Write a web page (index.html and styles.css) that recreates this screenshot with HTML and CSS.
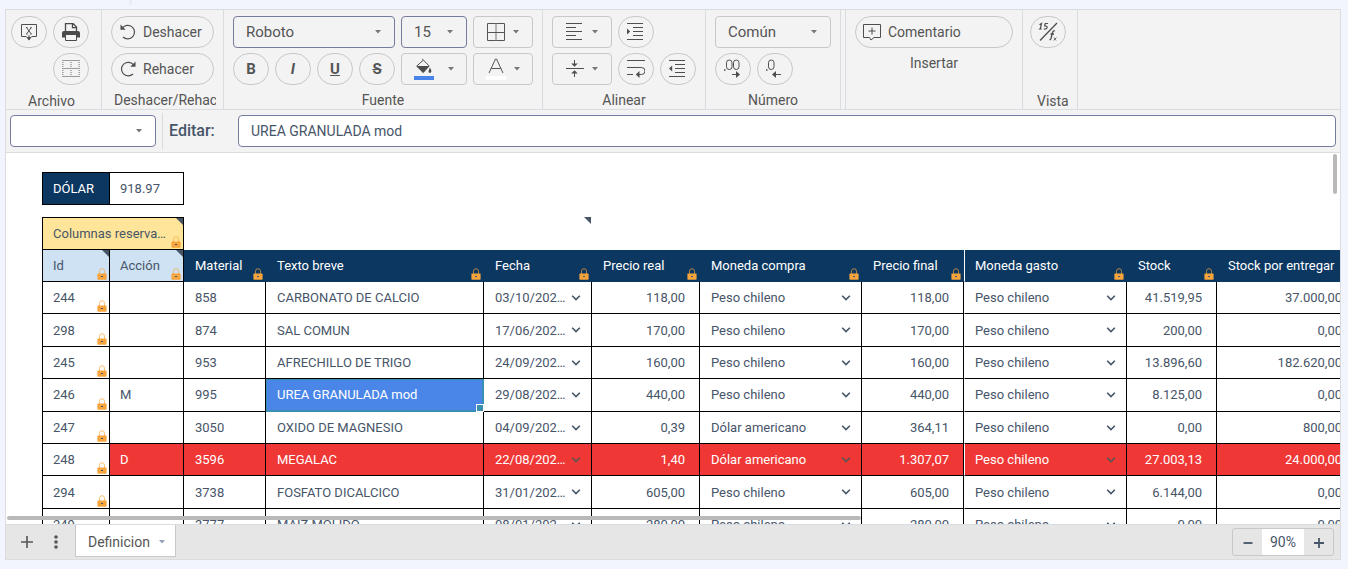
FILE: index.html
```html
<!DOCTYPE html>
<html lang="es">
<head>
<meta charset="utf-8">
<title>Definicion</title>
<link rel="stylesheet" href="styles.css">
</head>
<body>
<svg class="defs" aria-hidden="true">
  <symbol id="lock" viewBox="0 0 10 12"><path d="M2.5 6V3.2a2.5 2.5 0 0 1 5 0V6" fill="none" stroke="#f5a53c" stroke-opacity=".7"/><rect x=".4" y="5.4" width="9.2" height="6.3" rx=".6" fill="#f6a43b"/><rect class="keyhole" x="4" y="8" width="2" height="1"/></symbol>
  <symbol id="chev" viewBox="0 0 10 8"><path d="M1.2 1.8 5 5.6l3.8-3.8" fill="none" stroke="currentColor" stroke-width="1.6"/></symbol>
  <symbol id="caret" viewBox="0 0 6 4"><path d="M0 0h6L3 3.4z" fill="currentColor"/></symbol>
</svg>

<main class="spreadsheet">
  <div class="ribbon">
    <section class="group group-file">
      <div class="tools">
        <button class="tool" aria-label="Exportar"><svg width="18" height="18" viewBox="0 0 18 18" fill="none" stroke="#4f4f4f"><path d="M6.5 13.5h-5V1.5h15v12h-5M9 12v5"/><path d="m6.7 4.8 4.4 6M11.1 4.8l-4.4 6M6 4.6h1.5M10.3 4.6h1.5M6 11h1.5M10.3 11h1.5"/><path d="M6.3 14h5.4L9 17.6z" fill="#4f4f4f" stroke="none"/></svg></button>
        <button class="tool" aria-label="Imprimir"><svg width="18" height="18" viewBox="0 0 18 18" fill="none" stroke="#4a4a4a"><path d="M3.5 9V.6h7.6l3.4 3.4V9M10.5.6v4h4" stroke-width="1.3"/><path d="M0 14.500v-4.500Q0 8 2 8h14q2 0 2 2v4.500h-3V12H3v2.500z" fill="#4a4a4a" stroke="none"/><path d="M3.500 12v5.500h11V12"/></svg></button>
      </div>
      <div class="tools tools-end">
        <button class="tool" aria-label="Divisores"><svg width="18" height="18" viewBox="0 0 18 18" fill="none" stroke="#9a9a9a"><path d="M0 .5h18M0 8.5h18M0 16.5h18"/><path d="M.8 2v15M9 2v15M17.200 2v15" stroke-width="1.500" stroke-dasharray="1 1"/></svg></button>
      </div>
      <h2 class="caption">Archivo</h2>
    </section>
    <section class="group group-undo">
      <button class="tool tool-text"><svg width="16" height="16" viewBox="0 0 16 16" fill="none" stroke="#4f4f4f" stroke-width="1.2"><path d="M2.300 4A6.800 6.800 0 1 1 3 13"/><path d="M.5.500v5.200h5.200z" fill="#4f4f4f" stroke="none"/></svg>Deshacer</button>
      <button class="tool tool-text"><svg width="16" height="16" viewBox="0 0 16 16" fill="none" stroke="#4f4f4f" stroke-width="1.2"><path d="M13.700 4a6.800 6.800 0 1 0-.7 9"/><path d="M15.500.500v5.200h-5.200z" fill="#4f4f4f" stroke="none"/></svg>Rehacer</button>
      <h2 class="caption">Deshacer/Rehacer</h2>
    </section>
    <section class="group">
      <div class="tools">
        <span class="combo combo-font"><select aria-label="Fuente"><option>Roboto</option></select><svg class="caret"><use href="#caret"/></svg></span>
        <span class="combo combo-size"><select aria-label="Tamaño"><option>15</option></select><svg class="caret"><use href="#caret"/></svg></span>
        <button class="tool tool-menu" aria-label="Bordes"><svg width="18" height="18" viewBox="0 0 18 18" fill="none" stroke="#555"><path d="M.5.5h17v17H.5z"/><path d="M9 0v18" stroke="#777"/><path d="M0 9.5h18"/></svg><svg class="caret"><use href="#caret"/></svg></button>
      </div>
      <div class="tools">
        <button class="tool glyph">B</button>
        <button class="tool glyph italic">I</button>
        <button class="tool glyph underline">U</button>
        <button class="tool glyph strike">S</button>
        <button class="tool tool-menu tool-fill" aria-label="Color de fondo"><svg width="20" height="22" viewBox="0 0 20 22"><path d="m8.2.8 7 7.2-6 6.5L2.7 8.2 9 2.4" fill="none" stroke="#4a4a4a"/><path d="M2.7 8h12.500l-6 6.700z" fill="#4a4a4a"/><path d="M15.800 9.500q2 3 1.500 4a1.400 1.400 0 0 1-2.800 0z" fill="#4a4a4a"/><path d="M0 18h20v4H0z" fill="#4884e9"/></svg><svg class="caret"><use href="#caret"/></svg></button>
        <button class="tool tool-menu" aria-label="Color de texto"><svg width="20" height="22" viewBox="0 0 20 22"><path d="m3 15 6.500-14h1L17 15M5.200 10.500h9.600" fill="none" stroke="#555"/><path d="M0 18h20v4H0z" fill="#fff"/></svg><svg class="caret"><use href="#caret"/></svg></button>
      </div>
      <h2 class="caption">Fuente</h2>
    </section>
    <section class="group">
      <div class="tools">
        <button class="tool tool-menu" aria-label="Alineación horizontal"><svg width="18" height="18" viewBox="0 0 18 18" stroke="#4f4f4f"><path d="M0 .5h16M0 4.5h10M0 8.5h16M0 12.5h10M0 16.5h16"/></svg><svg class="caret"><use href="#caret"/></svg></button>
        <button class="tool" aria-label="Aumentar sangría"><svg width="18" height="18" viewBox="0 0 18 18" stroke="#4f4f4f"><path d="M0 .5h16M6 4.5h10M6 8.5h10M6 12.5h10M0 16.5h16"/><path d="M0 5.5v6l3.2-3z" fill="#4f4f4f" stroke="none"/></svg></button>
      </div>
      <div class="tools">
        <button class="tool tool-menu" aria-label="Alineación vertical"><svg width="18" height="18" viewBox="0 0 18 18" stroke="#4f4f4f"><path d="M0 8.5h18M8.5 0v6M8.5 17v-6"/><path d="M5.2 3.500h6.600l-3.300 3.300zM5.200 13.500h6.600l-3.300-3.300z" fill="#4f4f4f" stroke="none"/></svg><svg class="caret"><use href="#caret"/></svg></button>
        <button class="tool" aria-label="Ajustar texto"><svg width="18" height="18" viewBox="0 0 18 18" fill="none" stroke="#4f4f4f"><path d="M0 .5h18M0 7.5h14.500a3.500 3.500 0 0 1 0 7H10M0 14.500h6"/><path d="M12.500 11v7l-3.700-3.500z" fill="#4f4f4f" stroke="none"/></svg></button>
        <button class="tool" aria-label="Disminuir sangría"><svg width="18" height="18" viewBox="0 0 18 18" stroke="#4f4f4f"><path d="M0 .5h16M6 4.5h10M6 8.5h10M6 12.5h10M0 16.5h16"/><path d="M3.200 5.500v6L0 8.500z" fill="#4f4f4f" stroke="none"/></svg></button>
      </div>
      <h2 class="caption">Alinear</h2>
    </section>
    <section class="group">
      <div class="tools">
        <span class="combo combo-format"><select aria-label="Formato de número"><option>Común</option></select><svg class="caret"><use href="#caret"/></svg></span>
      </div>
      <div class="tools">
        <button class="tool" aria-label="Agregar decimales"><svg width="20" height="20" viewBox="0 0 20 20" fill="none" stroke="#4f4f4f"><rect x="3.500" y="1" width="5.500" height="9.500" rx="2.700"/><rect x="10.500" y="1" width="5.500" height="9.500" rx="2.700"/><path d="M1 11h1.500" stroke-width="1.600"/><path d="M9 15.500h6"/><path d="M13 12v7l4-3.500z" fill="#4f4f4f" stroke="none"/></svg></button>
        <button class="tool" aria-label="Quitar decimales"><svg width="20" height="20" viewBox="0 0 20 20" fill="none" stroke="#4f4f4f"><rect x="3.500" y="1" width="5.500" height="9.500" rx="2.700"/><path d="M1 11h1.500" stroke-width="1.600"/><path d="M9 15.500h7"/><path d="M11 12v7l-4-3.500z" fill="#4f4f4f" stroke="none"/></svg></button>
      </div>
      <h2 class="caption">Número</h2>
    </section>
    <div class="spacer"></div>
    <section class="group">
      <button class="tool tool-text tool-comment"><svg width="18" height="18" viewBox="0 0 18 18" fill="none" stroke="#4f4f4f"><path d="M.5 1.500h17v13H11L8 17l-1.500-2.500h-6zM9 4.500v7M5.500 8h7"/></svg>Comentario</button>
      <h2 class="caption">Insertar</h2>
    </section>
    <section class="group group-view">
      <button class="tool" aria-label="Mostrar fórmulas"><svg width="20" height="20" viewBox="0 0 20 20" fill="none" stroke="#4f4f4f"><path d="M2 18.500 19 1" stroke-width="1.300"/><path d="m1.500 2.800 2-1.300L2.300 7M.8 7h3M10 1.500H7.200L6.600 4h1.200q1.600.2 1.300 1.700Q8.500 7.300 5.800 7" stroke-width="1.200"/><path d="M17 9q-2-.8-2.500 1.500l-1.500 6q-.5 1.500-1.500 1M12.500 12h3.500" stroke-width="1.300"/><path d="m16 15.500 2 3M18.500 15.500l-3 3" stroke-width=".8"/></svg></button>
      <h2 class="caption">Vista</h2>
    </section>
  </div>

  <div class="formula-bar">
    <span class="combo combo-name"><select aria-label="Cuadro de nombres"><option></option></select><svg class="caret"><use href="#caret"/></svg></span>
    <label class="edit-label" for="edit">Editar:</label>
    <input class="edit-input" id="edit" type="text" value="UREA GRANULADA mod">
  </div>

  <div class="sheet">
    <div class="sheet-scroll">
      <table class="cells rate">
        <colgroup><col class="c-id"><col class="c-action"></colgroup>
        <tr><th>DÓLAR</th><td>918.97</td></tr>
      </table>
      <table class="cells items">
        <colgroup><col class="c-id"><col class="c-action"><col class="c-material"><col class="c-text"><col class="c-date"><col class="c-price"><col class="c-buy"><col class="c-final"><col class="c-spend"><col class="c-stock"><col class="c-pending"></colgroup>
        <thead>
          <tr><th class="reserved note" colspan="2">Columnas reserva…<svg class="lock"><use href="#lock"/></svg></th><td class="blank"></td><td class="blank"></td><td class="blank note"></td><td class="blank" colspan="6"></td></tr>
          <tr>
            <th class="key note">Id<svg class="lock"><use href="#lock"/></svg></th>
            <th class="key note">Acción<svg class="lock"><use href="#lock"/></svg></th>
            <th>Material<svg class="lock"><use href="#lock"/></svg></th>
            <th>Texto breve<svg class="lock"><use href="#lock"/></svg></th>
            <th>Fecha<svg class="lock"><use href="#lock"/></svg></th>
            <th>Precio real<svg class="lock"><use href="#lock"/></svg></th>
            <th>Moneda compra<svg class="lock"><use href="#lock"/></svg></th>
            <th>Precio final<svg class="lock"><use href="#lock"/></svg></th>
            <th class="split">Moneda gasto<svg class="lock"><use href="#lock"/></svg></th>
            <th>Stock<svg class="lock"><use href="#lock"/></svg></th>
            <th>Stock por entregar</th>
          </tr>
        </thead>
        <tbody>
          <tr><td>244<svg class="lock"><use href="#lock"/></svg></td><td></td><td>858</td><td>CARBONATO DE CALCIO</td><td>03/10/202…<button class="open" aria-label="Elegir fecha"><svg><use href="#chev"/></svg></button></td><td class="num">118,00</td><td>Peso chileno<button class="open" aria-label="Elegir moneda"><svg><use href="#chev"/></svg></button></td><td class="num">118,00</td><td class="split">Peso chileno<button class="open" aria-label="Elegir moneda"><svg><use href="#chev"/></svg></button></td><td class="num">41.519,95</td><td class="num">37.000,00</td></tr>
          <tr><td>298<svg class="lock"><use href="#lock"/></svg></td><td></td><td>874</td><td>SAL COMUN</td><td>17/06/202…<button class="open" aria-label="Elegir fecha"><svg><use href="#chev"/></svg></button></td><td class="num">170,00</td><td>Peso chileno<button class="open" aria-label="Elegir moneda"><svg><use href="#chev"/></svg></button></td><td class="num">170,00</td><td class="split">Peso chileno<button class="open" aria-label="Elegir moneda"><svg><use href="#chev"/></svg></button></td><td class="num">200,00</td><td class="num">0,00</td></tr>
          <tr><td>245<svg class="lock"><use href="#lock"/></svg></td><td></td><td>953</td><td>AFRECHILLO DE TRIGO</td><td>24/09/202…<button class="open" aria-label="Elegir fecha"><svg><use href="#chev"/></svg></button></td><td class="num">160,00</td><td>Peso chileno<button class="open" aria-label="Elegir moneda"><svg><use href="#chev"/></svg></button></td><td class="num">160,00</td><td class="split">Peso chileno<button class="open" aria-label="Elegir moneda"><svg><use href="#chev"/></svg></button></td><td class="num">13.896,60</td><td class="num">182.620,00</td></tr>
          <tr><td>246<svg class="lock"><use href="#lock"/></svg></td><td>M</td><td>995</td><td class="selected">UREA GRANULADA mod</td><td>29/08/202…<button class="open" aria-label="Elegir fecha"><svg><use href="#chev"/></svg></button></td><td class="num">440,00</td><td>Peso chileno<button class="open" aria-label="Elegir moneda"><svg><use href="#chev"/></svg></button></td><td class="num">440,00</td><td class="split">Peso chileno<button class="open" aria-label="Elegir moneda"><svg><use href="#chev"/></svg></button></td><td class="num">8.125,00</td><td class="num">0,00</td></tr>
          <tr><td>247<svg class="lock"><use href="#lock"/></svg></td><td></td><td>3050</td><td>OXIDO DE MAGNESIO</td><td>04/09/202…<button class="open" aria-label="Elegir fecha"><svg><use href="#chev"/></svg></button></td><td class="num">0,39</td><td>Dólar americano<button class="open" aria-label="Elegir moneda"><svg><use href="#chev"/></svg></button></td><td class="num">364,11</td><td class="split">Peso chileno<button class="open" aria-label="Elegir moneda"><svg><use href="#chev"/></svg></button></td><td class="num">0,00</td><td class="num">800,00</td></tr>
          <tr class="deleted"><td>248<svg class="lock"><use href="#lock"/></svg></td><td>D</td><td>3596</td><td>MEGALAC</td><td>22/08/202…<button class="open" aria-label="Elegir fecha"><svg><use href="#chev"/></svg></button></td><td class="num">1,40</td><td>Dólar americano<button class="open" aria-label="Elegir moneda"><svg><use href="#chev"/></svg></button></td><td class="num">1.307,07</td><td class="split">Peso chileno<button class="open" aria-label="Elegir moneda"><svg><use href="#chev"/></svg></button></td><td class="num">27.003,13</td><td class="num">24.000,00</td></tr>
          <tr><td>294<svg class="lock"><use href="#lock"/></svg></td><td></td><td>3738</td><td>FOSFATO DICALCICO</td><td>31/01/202…<button class="open" aria-label="Elegir fecha"><svg><use href="#chev"/></svg></button></td><td class="num">605,00</td><td>Peso chileno<button class="open" aria-label="Elegir moneda"><svg><use href="#chev"/></svg></button></td><td class="num">605,00</td><td class="split">Peso chileno<button class="open" aria-label="Elegir moneda"><svg><use href="#chev"/></svg></button></td><td class="num">6.144,00</td><td class="num">0,00</td></tr>
          <tr><td>249<svg class="lock"><use href="#lock"/></svg></td><td></td><td>3777</td><td>MAIZ MOLIDO</td><td>08/01/202…<button class="open" aria-label="Elegir fecha"><svg><use href="#chev"/></svg></button></td><td class="num">280,00</td><td>Peso chileno<button class="open" aria-label="Elegir moneda"><svg><use href="#chev"/></svg></button></td><td class="num">280,00</td><td class="split">Peso chileno<button class="open" aria-label="Elegir moneda"><svg><use href="#chev"/></svg></button></td><td class="num">0,00</td><td class="num">0,00</td></tr>
        </tbody>
      </table>
    </div>
    <div class="thumb thumb-y"></div>
    <div class="thumb thumb-x"></div>
  </div>

  <footer class="tab-bar">
    <button class="bar-button" aria-label="Agregar hoja"><svg width="14" height="14" viewBox="0 0 14 14"><path d="M7 1v12M1 7h12" stroke="#555" stroke-width="1.6"/></svg></button>
    <button class="bar-button" aria-label="Lista de hojas"><svg width="14" height="14" viewBox="0 0 14 14" fill="#555"><circle cx="7" cy="2" r="1.8"/><circle cx="7" cy="7" r="1.8"/><circle cx="7" cy="12" r="1.8"/></svg></button>
    <button class="tab">Definicion<svg class="caret"><use href="#caret"/></svg></button>
    <div class="zoom">
      <button class="zoom-step" aria-label="Alejar"><svg width="12" height="12" viewBox="0 0 12 12"><path d="M1.500 7h9" stroke="#475569" stroke-width="1.8"/></svg></button>
      <span class="zoom-value">90%</span>
      <button class="zoom-step" aria-label="Acercar"><svg width="12" height="12" viewBox="0 0 12 12"><path d="M1 7h10M6 2v10" stroke="#475569" stroke-width="1.8"/></svg></button>
    </div>
  </footer>
</main>
</body>
</html>
```
FILE: styles.css
```css
* { box-sizing: border-box; }

body {
  margin: 0;
  background: #f2f5fe;
  color: #475569;
  font: 13px/20px Roboto, "Liberation Sans", sans-serif;
}

/* Foot of the divider above the spreadsheet */
body::before {
  content: "";
  position: absolute;
  top: 0;
  left: 129px;
  width: 3px;
  height: 5px;
  background: #ecedf0;
}

button, select, input { font: inherit; color: inherit; }
button { cursor: pointer; }
svg { display: block; flex: none; }
.defs { position: absolute; width: 0; height: 0; }

.spreadsheet {
  display: flex;
  flex-direction: column;
  height: calc(100vh - 18px);
  border: 1px solid #d9dce0;
  margin: 9px 7px 9px 5px;
  background: #f3f3f3;
}

/* Ribbon */
.ribbon {
  display: flex;
  height: 100px;
  border-bottom: 1px solid #d9dce0;
  color: #555;
  font-size: 15px;
}

.group {
  display: flex;
  flex: none;
  flex-direction: column;
  gap: 5px;
  padding: 6px 9px 0;
  border-right: 1px solid #d9dce0;
}
.group-file { padding: 6px 12px 0 5px; }
.group-file .caption { padding-left: 3px; line-height: 22px; }
.group-undo { width: 122px; padding: 6px 7px 0 9px; }
.group-undo .tool { width: 103px; }
.group-undo .caption { overflow: hidden; padding-left: 3px; text-align: left; }
.group-view { padding: 6px 8px 0 7px; }
.group-view .caption { margin-top: 37px; padding-left: 7px; line-height: 22px; }
.spacer { width: 5px; border-right: 1px solid #d9dce0; }

.tools { display: flex; gap: 6px; }
.tools-end { justify-content: flex-end; }

.caption {
  margin: 0;
  font-size: 14px;
  font-weight: 400;
  line-height: 20px;
  text-align: center;
  white-space: nowrap;
}

.tool {
  display: flex;
  flex: none;
  align-items: center;
  justify-content: center;
  width: 36px;
  height: 32px;
  padding: 0;
  border: 1px solid #c8c8c8;
  border-radius: 16px;
  background: transparent;
}
.tool-text { justify-content: flex-start; gap: 7px; padding-left: 8px; font-size: 14px; }
.tool-comment { width: 158px; padding-left: 7px; }
.tool-menu { gap: 8px; width: 60px; border-radius: 4px; }
.tool-fill { gap: 14px; width: 66px; }
.glyph { font-size: 15px; font-weight: 700; }
.italic { font-style: italic; }
.underline { text-decoration: underline; }
.strike { text-decoration: line-through; }

.caret { width: 6px; height: 4px; color: #777; }

.combo { position: relative; height: 32px; }
.combo .caret { position: absolute; top: 14px; right: 14px; pointer-events: none; }
.combo select {
  width: 100%;
  height: 100%;
  padding: 0 12px;
  border: 1px solid #767b9e;
  border-radius: 4px;
  background: transparent;
  appearance: none;
}
.combo-font { width: 162px; }
.combo-size { width: 66px; }
.combo-format { width: 116px; }
.combo-format select { border-color: #c8c8c8; }
.combo-name { width: 146px; }
.combo-name select { background: #fff; }

/* Formula bar */
.formula-bar {
  display: flex;
  align-items: center;
  height: 43px;
  padding: 0 4px;
  border-bottom: 1px solid #d9dce0;
}
.edit-label {
  width: 76px;
  margin-left: 6px;
  padding-left: 6px;
  border-left: 1px solid #d9dce0;
  font-size: 16px;
  font-weight: 500;
  line-height: 36px;
}
.edit-input {
  flex: 1;
  min-width: 0;
  height: 32px;
  padding: 0 12px;
  border: 1px solid #767b9e;
  border-radius: 4px;
  background: #fff;
  font-size: 14px;
}

/* Sheet */
.sheet { position: relative; flex: 1; min-height: 0; background: #fff; }
.sheet-scroll { height: 100%; overflow: hidden; padding: 19px 0 0 36px; }

.cells { border-spacing: 0; table-layout: fixed; }
.rate { width: 142px; margin-bottom: 12px; border-top: 1px solid #000; }
.items { width: 1315px; }

.c-id { width: 68px; }
.c-action { width: 74px; }
.c-material { width: 82px; }
.c-text { width: 218px; }
.c-date, .c-price { width: 108px; }
.c-buy { width: 162px; }
.c-final { width: 102px; }
.c-spend { width: 163px; }
.c-stock { width: 90px; }
.c-pending { width: 140px; }

.cells th, .cells td {
  position: relative;
  height: 32px;
  padding: 0 0 0 11px;
  border: solid #000;
  border-width: 0 1px 1px 0;
  font-weight: 400;
  text-align: left;
  white-space: nowrap;
}
.cells th { border-color: #0b3761; background: #0b3761; color: #fff; }
.cells tr > :first-child { padding-left: 10px; border-left: 1px solid #000; }
.cells tr > :nth-child(2) { padding-left: 10px; }
.cells.rate th { border-color: #000; }
.cells tbody tr:nth-child(5n + 2) td, .cells tbody tr:nth-child(4) td { height: 33px; }
.items tbody tr:nth-child(5n + 2) td { padding-top: 1px; }

.cells th.reserved, .cells th.key { border-color: #000; color: #475569; }
.cells th.reserved { height: 33px; border-top: 1px solid #000; background: #ffe599; }
.cells th.key { background: #cfe2f3; }
.cells td.blank { border: 0; }
.cells td.num { padding-right: 14px; padding-left: 0; text-align: right; }
.cells .split { padding-left: 10px; border-left: 1px solid #fff; }

.note::after {
  content: "";
  position: absolute;
  top: 0;
  right: 0;
  border-top: 7px solid #475569;
  border-left: 7px solid transparent;
}
.blank.note::after { right: 1px; }

.lock { position: absolute; right: 2px; bottom: 1px; width: 10px; height: 12px; }
.keyhole { fill: #475569; }

.open {
  position: absolute;
  top: 0;
  right: 0;
  display: flex;
  align-items: center;
  justify-content: center;
  width: 30px;
  height: 100%;
  padding: 0;
  border: 0;
  background: none;
}
.open svg { width: 10px; height: 8px; }

.cells .deleted td:not(:first-child) { background: #ef3835; color: #fff; }
.deleted .open { color: #555; }

.cells td.selected {
  border-color: #3a8fb0;
  background: #4a86e8;
  box-shadow: inset 1px 1px #3a8fb0, inset -1px -1px #3a8fb0;
  color: #fff;
}
.selected::after {
  content: "";
  position: absolute;
  right: -1px;
  bottom: -1px;
  width: 6px;
  height: 6px;
  border: 1px solid #fff;
  background: #3a8fb0;
}

.thumb { position: absolute; border-radius: 2px; background: #b9b9b9; }
.thumb-x { bottom: 4px; left: 1px; width: 64%; height: 4px; }
.thumb-y { top: 1px; right: 3px; width: 4px; height: 40px; }

/* Sheet tabs */
.tab-bar {
  display: flex;
  align-items: center;
  flex: none;
  height: 35px;
  padding: 0 6px;
  border-top: 1px solid #d9dce0;
  background: #e6e6e6;
  color: #555;
  font-size: 14px;
}

.bar-button {
  display: flex;
  align-items: center;
  justify-content: center;
  width: 29px;
  height: 30px;
  padding: 0;
  border: 0;
  background: none;
}
.tab {
  display: flex;
  align-items: center;
  align-self: flex-start;
  gap: 9px;
  height: 32px;
  margin: 0 auto 0 5px;
  padding: 2px 10px 0 12px;
  border: 1px solid #c8c8c8;
  border-top: 0;
  background: #fff;
}
.tab .caret { color: #94a3b8; }

.zoom {
  display: flex;
  height: 28px;
  border: 1px solid #c8c8c8;
  border-radius: 3px;
  color: #475569;
}
.zoom-step {
  display: flex;
  align-items: center;
  justify-content: center;
  width: 29px;
  padding: 0;
  border: 0;
  background: none;
}
.zoom-value { width: 42px; background: #fff; line-height: 26px; text-align: center; }
```
